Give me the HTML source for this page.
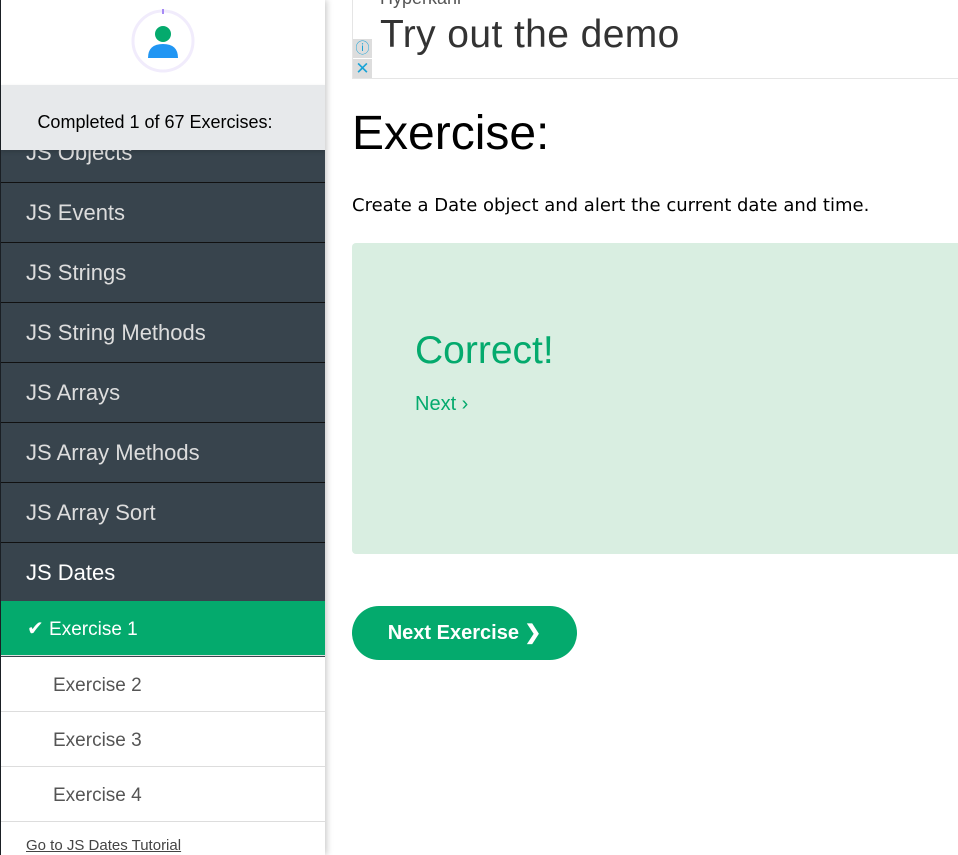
<!DOCTYPE html>
<html><head><style>
*{box-sizing:border-box;margin:0;padding:0}
body{width:958px;height:855px;overflow:hidden;background:#fff;font-family:"Liberation Sans",sans-serif;position:relative}
#side{position:absolute;left:0;top:0;width:325px;height:855px;background:#38444d;box-shadow:2px 0 6px rgba(0,0,0,.2);overflow:hidden;border-left:1px solid #1a1f24}
#top{position:absolute;left:0;top:0;width:324px;height:85px;background:#fff}
#comp{position:absolute;left:0;top:85px;width:324px;height:65px;background:#e7e9eb;font-size:18px;text-align:center;padding-top:27px;padding-right:16px;color:#000;z-index:2;box-shadow:0 2px 4px rgba(0,0,0,.15)}
.it{position:absolute;left:0;width:324px;height:60px;color:#ddd;font-size:22px;padding-left:25px;line-height:60px;border-bottom:1px solid #111}
.ex{position:absolute;left:0;width:324px;height:55px;background:#fff;color:#555;font-size:19px;padding-left:52px;line-height:57px;border-bottom:1px solid #ddd}
</style></head><body>
<div id="side">
<div id="top">
<svg width="66" height="66" viewBox="0 0 66 66" style="position:absolute;left:129px;top:8px">
<circle cx="33" cy="33" r="30" fill="none" stroke="#f1ecfc" stroke-width="3"/>
<rect x="32" y="1" width="2" height="5" fill="#a78bf5"/>
<circle cx="33" cy="26" r="8" fill="#04aa6d"/>
<path d="M18 50 Q18 36 33 36 Q48 36 48 50 Z" fill="#2196f3"/>
</svg>
</div>
<div id="comp">Completed 1 of 67 Exercises:</div>
<div class="it" style="top:123px">JS Objects</div>
<div class="it" style="top:183px">JS Events</div>
<div class="it" style="top:243px">JS Strings</div>
<div class="it" style="top:303px">JS String Methods</div>
<div class="it" style="top:363px">JS Arrays</div>
<div class="it" style="top:423px">JS Array Methods</div>
<div class="it" style="top:483px">JS Array Sort</div>
<div class="it" style="top:543px;color:#fff">JS Dates</div>
<div class="ex" style="top:601px;background:#04aa6d;color:#fff;padding-left:26px;border-bottom:1px solid #e0e0e0"><span style="font-size:20px">✔</span> Exercise 1</div>
<div class="ex" style="top:657px">Exercise 2</div>
<div class="ex" style="top:712px">Exercise 3</div>
<div class="ex" style="top:767px">Exercise 4</div>
<div style="position:absolute;left:0;top:822px;width:324px;height:40px;background:#fff;padding:15px 0 0 25px;font-size:15px;color:#444;text-decoration:underline">Go to JS Dates Tutorial</div>
</div>
<div style="position:absolute;left:352px;top:0;width:606px;height:79px;border-left:1px solid #e5e5e5;border-bottom:1px solid #e5e5e5">
<div style="position:absolute;left:27px;top:-12px;font-size:18px;color:#555">Hyperkahl</div>
<div style="position:absolute;left:27px;top:13px;font-size:39px;color:#333;letter-spacing:0.4px">Try out the demo</div>
<div style="position:absolute;left:0;top:39px;width:19px;height:19px;background:#ddd;color:#1aa3d6;font-size:14px;text-align:center;line-height:19px">ⓘ</div>
<div style="position:absolute;left:0;top:59px;width:19px;height:19px;background:#ddd;color:#1aa3d6;font-size:17px;text-align:center;line-height:19px">✕</div>
</div>
<div style="position:absolute;left:352px;top:106px;font-size:48px;color:#000">Exercise:</div>
<div style="position:absolute;left:352px;top:195px;font-family:'DejaVu Sans',sans-serif;font-size:18px;color:#000">Create a Date object and alert the current date and time.</div>
<div style="position:absolute;left:352px;top:243px;width:606px;height:311px;background:#d9eee1;border-radius:4px 0 0 4px">
<div style="position:absolute;left:63px;top:86px;font-size:39px;color:#04aa6d">Correct!</div>
<div style="position:absolute;left:63px;top:150px;font-size:20px;color:#04aa6d">Next ›</div>
</div>
<div style="position:absolute;left:352px;top:606px;width:225px;height:54px;border-radius:27px;background:#04aa6d;color:#fff;font-size:20px;font-weight:bold;text-align:center;line-height:54px">Next Exercise ❯</div>
</body></html>
